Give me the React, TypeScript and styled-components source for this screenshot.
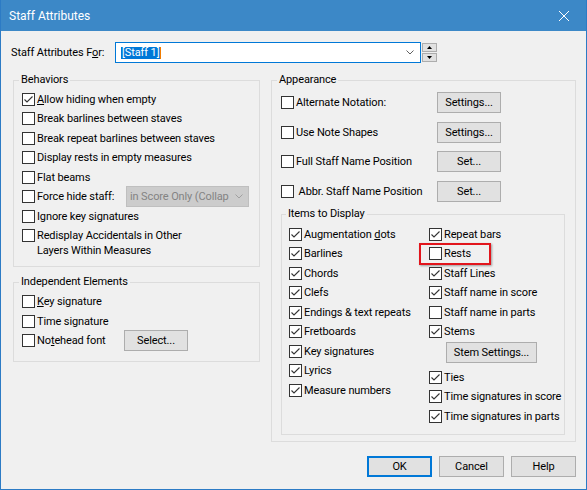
import React from 'react';
import styled, { createGlobalStyle } from 'styled-components';

const GlobalStyle = createGlobalStyle`
  html, body {
    margin: 0;
    padding: 0;
    background: #f0f0f0;
  }
  body {
    font-family: Roboto, 'Liberation Sans', Arial, sans-serif;
  }
`;

const Window = styled.div`
  box-sizing: border-box;
  width: 587px;
  height: 490px;
  display: flex;
  flex-direction: column;
  background: #f0f0f0;
  border: 1px solid #2c7bc5;
  border-top: 0;
  font-family: Roboto, 'Liberation Sans', Arial, sans-serif;
  font-size: 11px;
  letter-spacing: -0.12px;
  color: #000;
`;

const TitleBar = styled.div`
  flex: none;
  height: 31px;
  display: flex;
  align-items: center;
  justify-content: space-between;
  padding-left: 8px;
  background: #3c88c7;
  color: #fff;
  font-size: 12px;
  letter-spacing: 0;
`;

const CloseButton = styled.div`
  width: 44px;
  height: 31px;
  display: flex;
  align-items: center;
  justify-content: center;
`;

const TopRow = styled.div`
  display: flex;
  align-items: center;
  height: 21px;
  margin-top: 11px;
  padding-left: 10px;
`;

const FieldLabel = styled.span`
  width: 104px;
  white-space: nowrap;
`;

const Combo = styled.div`
  box-sizing: border-box;
  width: 306px;
  height: 21px;
  display: flex;
  align-items: center;
  padding: 0 6px 0 5px;
  background: #fff;
  border: 1px solid #0078d7;
`;

const Selection = styled.span`
  background: #0078d7;
  color: #fff;
  line-height: 12px;
  padding: 0 1px;
`;

const Caret = styled.span`
  width: 1px;
  height: 12px;
  background: #f07c00;
`;

const ComboFill = styled.span`
  flex: 1;
`;

const Spin = styled.div`
  display: flex;
  flex-direction: column;
  gap: 1px;
  margin-left: 1px;
`;

const SpinButton = styled.div`
  box-sizing: border-box;
  width: 15px;
  height: 9px;
  display: flex;
  align-items: center;
  justify-content: center;
  background: #e1e1e1;
  border: 1px solid #adadad;
`;

const Columns = styled.div`
  display: flex;
  gap: 11px;
  padding: 9px 0 0 12px;
`;

const Column = styled.div<{ $width: number }>`
  width: ${(p) => p.$width}px;
  display: flex;
  flex-direction: column;
  gap: 7px;
`;

const Group = styled.fieldset`
  margin: 0;
  padding: 0;
  min-width: 0;
  border: 1px solid #dcdcdc;
  border-radius: 0;
`;

const Legend = styled.legend<{ $offset: number }>`
  padding: 0 2px;
  margin-left: ${(p) => p.$offset}px;
  line-height: 16px;
  font-size: 11px;
`;

const GroupBody = styled.div<{ $pad: string }>`
  display: flex;
  flex-direction: column;
  padding: ${(p) => p.$pad};
`;

const Row = styled.div<{ $tall?: boolean }>`
  position: relative;
  display: flex;
  align-items: ${(p) => (p.$tall ? 'flex-start' : 'center')};
  height: ${(p) => (p.$tall ? 'auto' : '19.5px')};
  padding-top: ${(p) => (p.$tall ? '2.25px' : '0')};
`;

const Box = styled.span<{ $tall?: boolean }>`
  box-sizing: border-box;
  flex: none;
  width: 13px;
  height: 13px;
  margin-top: ${(p) => (p.$tall ? '1px' : '0')};
  display: flex;
  align-items: center;
  justify-content: center;
  background: #fff;
  border: 1px solid #333;
`;

const Text = styled.span<{ $width?: number; $tall?: boolean }>`
  margin-left: 2px;
  white-space: ${(p) => (p.$tall ? 'normal' : 'nowrap')};
  line-height: ${(p) => (p.$tall ? '15px' : 'normal')};
  ${(p) => (p.$width ? `width: ${p.$width}px; flex: none;` : '')}
`;

const Button = styled.button<{ $width: number; $default?: boolean }>`
  box-sizing: border-box;
  flex: none;
  width: ${(p) => p.$width}px;
  height: 21px;
  padding: 0;
  margin: 0;
  background: #e1e1e1;
  border: ${(p) => (p.$default ? '2px solid #0078d7' : '1px solid #adadad')};
  border-radius: 0;
  font: inherit;
  letter-spacing: inherit;
  color: #000;
`;

const DisabledSelect = styled.div`
  box-sizing: border-box;
  flex: none;
  width: 123px;
  height: 21px;
  display: flex;
  align-items: center;
  justify-content: space-between;
  padding: 0 5px 0 3px;
  background: #cccccc;
  border: 1px solid #bfbfbf;
  color: #838383;
  white-space: nowrap;
  overflow: hidden;
`;

const AppRows = styled.div`
  display: flex;
  flex-direction: column;
  gap: 8.5px;
`;

const AppRow = styled.div`
  display: flex;
  align-items: center;
  height: 21px;
`;

const ItemsGroup = styled(Group)`
  margin-top: 4.5px;
`;

const ItemsGrid = styled.div`
  display: grid;
  grid-template-columns: 140px 1fr;
  padding: 2.25px 0 8.25px 7px;
`;

const ItemsColumn = styled.div`
  display: flex;
  flex-direction: column;
`;

const StemButtonRow = styled.div`
  padding-left: 17px;
  margin: 0.75px 0 4.25px;
`;

const Highlight = styled.span`
  position: absolute;
  left: -10px;
  top: -0.75px;
  box-sizing: border-box;
  width: 72px;
  height: 22px;
  border: 2px solid #e2151c;
  box-shadow: 1px 1px 2px rgba(0, 0, 0, 0.35);
  pointer-events: none;
`;

const Footer = styled.div`
  display: flex;
  justify-content: flex-end;
  gap: 7px;
  padding: 14px 10px 0 0;
`;

const Check = ({ checked, tall }: { checked?: boolean; tall?: boolean }) => (
  <Box $tall={tall}>
    {checked && (
      <svg width="11" height="11" viewBox="0 0 11 11">
        <path d="M1.5 5.5 L4 8 L9.5 2.5" fill="none" stroke="#333" strokeWidth="1.1" />
      </svg>
    )}
  </Box>
);

type Item = { label: React.ReactNode; checked?: boolean; highlight?: boolean };

const CheckRow = ({ label, checked, highlight }: Item) => (
  <Row>
    <Check checked={checked} />
    <Text>{label}</Text>
    {highlight && <Highlight />}
  </Row>
);

const Chevron = ({ color }: { color: string }) => (
  <svg width="8" height="5" viewBox="0 0 8 5">
    <path d="M0.5 0.5 L4 4 L7.5 0.5" fill="none" stroke={color} strokeWidth="1" />
  </svg>
);

const behaviors: Item[] = [
  { label: <><u>A</u>llow hiding when empty</>, checked: true },
  { label: 'Break barlines between staves' },
  { label: 'Break repeat barlines between staves' },
  { label: 'Display rests in empty measures' },
  { label: 'Flat beams' },
];

const leftItems: Item[] = [
  { label: <>Augmentation <u>d</u>ots</>, checked: true },
  { label: 'Barlines', checked: true },
  { label: 'Chords', checked: true },
  { label: 'Clefs', checked: true },
  { label: 'Endings & text repeats', checked: true },
  { label: 'Fretboards', checked: true },
  { label: 'Key signatures', checked: true },
  { label: 'Lyrics', checked: true },
  { label: 'Measure numbers', checked: true },
];

const rightItems: Item[] = [
  { label: 'Repeat bars', checked: true },
  { label: 'Rests', highlight: true },
  { label: 'Staff Lines', checked: true },
  { label: 'Staff name in score', checked: true },
  { label: 'Staff name in parts' },
  { label: 'Stems', checked: true },
];

const lowerRightItems: Item[] = [
  { label: 'Ties', checked: true },
  { label: 'Time signatures in score', checked: true },
  { label: 'Time signatures in parts', checked: true },
];

const appearance = [
  { label: 'Alternate Notation:', button: 'Settings...' },
  { label: 'Use Note Shapes', button: 'Settings...' },
  { label: 'Full Staff Name Position', button: 'Set...' },
  { label: '\u00a0Abbr. Staff Name Position', button: 'Set...' },
];

export default function App() {
  return (
    <>
      <GlobalStyle />
      <Window>
        <TitleBar>
          <span>Staff Attributes</span>
          <CloseButton>
            <svg width="10" height="10" viewBox="0 0 10 10">
              <path d="M0 0 L10 10 M10 0 L0 10" stroke="#fff" strokeWidth="1" />
            </svg>
          </CloseButton>
        </TitleBar>

        <TopRow>
          <FieldLabel>
            Staff Attributes F<u>o</u>r:
          </FieldLabel>
          <Combo>
            <Selection>[Staff 1]</Selection>
            <Caret />
            <ComboFill />
            <Chevron color="#606060" />
          </Combo>
          <Spin>
            <SpinButton>
              <svg width="5" height="3" viewBox="0 0 5 3">
                <path d="M0 3 L2.5 0 L5 3 Z" fill="#000" />
              </svg>
            </SpinButton>
            <SpinButton>
              <svg width="5" height="3" viewBox="0 0 5 3">
                <path d="M0 0 L2.5 3 L5 0 Z" fill="#000" />
              </svg>
            </SpinButton>
          </Spin>
        </TopRow>

        <Columns>
          <Column $width={247}>
            <Group>
              <Legend $offset={5}>Behaviors</Legend>
              <GroupBody $pad="1.25px 0 8px 8px">
                {behaviors.map((item, i) => (
                  <CheckRow key={i} {...item} />
                ))}
                <Row>
                  <Check />
                  <Text $width={89}>Force hide staff:</Text>
                  <DisabledSelect>
                    <span>in Score Only (Collap</span>
                    <Chevron color="#a0a0a0" />
                  </DisabledSelect>
                </Row>
                <CheckRow label="Ignore key signatures" />
                <Row $tall>
                  <Check tall />
                  <Text $tall>
                    Redisplay Accidentals in Other
                    <br />
                    Layers Within Measures
                  </Text>
                </Row>
              </GroupBody>
            </Group>

            <Group>
              <Legend $offset={5}>Independent Elements</Legend>
              <GroupBody $pad="1.75px 0 10.75px 8px">
                <CheckRow label={<><u>K</u>ey signature</>} />
                <CheckRow label="Time signature" />
                <Row>
                  <Check />
                  <Text $width={87}>
                    No<u>t</u>ehead font
                  </Text>
                  <Button $width={64}>Select...</Button>
                </Row>
              </GroupBody>
            </Group>
          </Column>

          <Column $width={305}>
            <Group>
              <Legend $offset={5}>Appearance</Legend>
              <GroupBody $pad="4px 10px 6px 9px">
                <AppRows>
                  {appearance.map((row) => (
                    <AppRow key={row.label}>
                      <Check />
                      <Text $width={141}>{row.label}</Text>
                      <Button $width={64}>{row.button}</Button>
                    </AppRow>
                  ))}
                </AppRows>

                <ItemsGroup>
                  <Legend $offset={4}>Items to Display</Legend>
                  <ItemsGrid>
                    <ItemsColumn>
                      {leftItems.map((item, i) => (
                        <CheckRow key={i} {...item} />
                      ))}
                    </ItemsColumn>
                    <ItemsColumn>
                      {rightItems.map((item, i) => (
                        <CheckRow key={i} {...item} />
                      ))}
                      <StemButtonRow>
                        <Button $width={91}>Stem Settings...</Button>
                      </StemButtonRow>
                      {lowerRightItems.map((item, i) => (
                        <CheckRow key={i} {...item} />
                      ))}
                    </ItemsColumn>
                  </ItemsGrid>
                </ItemsGroup>
              </GroupBody>
            </Group>
          </Column>
        </Columns>

        <Footer>
          <Button $width={65} $default>
            OK
          </Button>
          <Button $width={65}>Cancel</Button>
          <Button $width={65}>Help</Button>
        </Footer>
      </Window>
    </>
  );
}
